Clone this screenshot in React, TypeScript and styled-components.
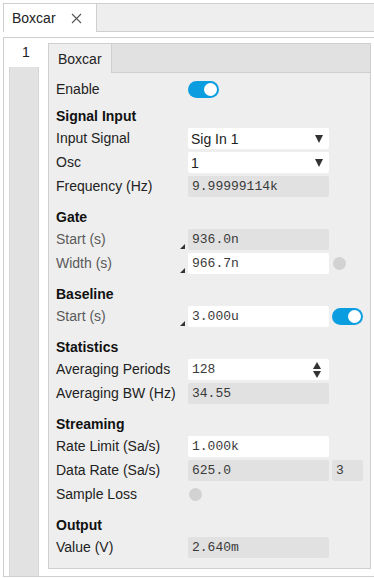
import React from 'react';
import styled, { createGlobalStyle } from 'styled-components';

const GlobalStyle = createGlobalStyle`
  html, body {
    margin: 0;
    padding: 0;
    background: #ffffff;
    font-family: "Liberation Sans", Arial, sans-serif;
    font-size: 14px;
    color: #222;
  }
`;

const Page = styled.div`
  width: 374px;
  height: 578px;
  overflow: hidden;
`;

const TopBar = styled.div`
  display: flex;
  margin: 3px 0 0 3px;
  height: 28px;
  border-top: 1px solid #cfcfcf;
  border-left: 1px solid #cfcfcf;
  background: #eeeeee;
`;

const TopTab = styled.div`
  display: flex;
  align-items: center;
  gap: 15px;
  width: 84px;
  padding-left: 8px;
  background: #ffffff;
  border-right: 1px solid #cfcfcf;
`;

const TopFill = styled.div`
  flex: 1;
  border-bottom: 1px solid #cfcfcf;
`;

const Close = styled.svg`
  width: 11px;
  height: 11px;
`;

const Outer = styled.div`
  display: flex;
  margin: 5px 0 0 3px;
  height: 538px;
  border: 1px solid #cfcfcf;
  border-right: none;
`;

const SideCol = styled.div`
  display: flex;
  flex-direction: column;
  width: 44px;
`;

const SideTab = styled.div`
  height: 29px;
  padding: 6px 0 0 18px;
  box-sizing: border-box;
`;

const SideStrip = styled.div`
  flex: 1;
  margin: 0 9px 0 5px;
  background: #e2e2e2;
  border-left: 1px solid #d6d6d6;
  border-right: 1px solid #d6d6d6;
`;

const Inner = styled.div`
  display: flex;
  flex-direction: column;
  width: 323px;
  margin: 5px 0 7px 0;
  box-sizing: border-box;
  border: 1px solid #cfcfcf;
  background: #eeeeee;
`;

const InnerBar = styled.div`
  display: flex;
  height: 28px;
  background: #e1e1e1;
  border-bottom: 1px solid #cfcfcf;
`;

const InnerTab = styled.div`
  display: flex;
  align-items: center;
  width: 53px;
  padding-left: 9px;
  margin-bottom: -1px;
  background: #eeeeee;
  border-right: 1px solid #cfcfcf;
`;

const Content = styled.div`
  display: flex;
  flex-direction: column;
  padding: 6px 0 0 7px;
`;

const Section = styled.div<{ first?: boolean }>`
  display: flex;
  flex-direction: column;
  gap: 3px;
  margin-top: ${(p) => (p.first ? '7px' : '11px')};
`;

const Header = styled.div`
  height: 18px;
  line-height: 18px;
  font-weight: bold;
  color: #111;
`;

const Row = styled.div`
  display: grid;
  grid-template-columns: 129px 141px 31px;
  column-gap: 3px;
  height: 21px;
  align-items: center;
`;

const Label = styled.div<{ dim?: boolean }>`
  display: flex;
  justify-content: space-between;
  height: 21px;
  line-height: 21px;
  color: ${(p) => (p.dim ? '#5a5a5a' : '#222')};
  white-space: nowrap;
`;

const Corner = styled.span`
  align-self: flex-end;
  margin: 0 0 1px 0;
  width: 0;
  height: 0;
  border-left: 5px solid transparent;
  border-bottom: 5px solid #333;
`;

const Field = styled.div<{ readOnly?: boolean }>`
  display: flex;
  align-items: center;
  justify-content: space-between;
  height: 21px;
  box-sizing: border-box;
  padding: 0 4px;
  border-radius: 2px;
  background: ${(p) => (p.readOnly ? '#e1e1e1' : '#ffffff')};
  font-family: "Liberation Mono", "Courier New", monospace;
  font-size: 13px;
  color: #3a3a3a;
`;

const SelectField = styled(Field)`
  padding: 0 3px;
  font-family: "Liberation Sans", Arial, sans-serif;
  font-size: 14px;
  color: #222;
`;

const Arrow = styled.span`
  margin-right: 3px;
  width: 0;
  height: 0;
  border-left: 4px solid transparent;
  border-right: 4px solid transparent;
  border-top: 8px solid #333;
`;

const Spinner = styled.span`
  display: flex;
  flex-direction: column;
  gap: 2px;
  margin-right: 4px;
`;

const SpinArrow = styled.span<{ up?: boolean }>`
  width: 0;
  height: 0;
  border-left: 4px solid transparent;
  border-right: 4px solid transparent;
  ${(p) => (p.up ? 'border-bottom: 7px solid #333;' : 'border-top: 7px solid #333;')}
`;

const Toggle = styled.div`
  display: flex;
  justify-content: flex-end;
  align-items: center;
  width: 31px;
  height: 17px;
  box-sizing: border-box;
  padding: 2px;
  border-radius: 9px;
  background: #0a9de0;
`;

const Knob = styled.div`
  width: 13px;
  height: 13px;
  border-radius: 50%;
  background: #ffffff;
`;

const Dot = styled.div`
  width: 13px;
  height: 13px;
  margin-left: 1px;
  border-radius: 50%;
  background: #d2d2d2;
`;

const Switch = () => (
  <Toggle>
    <Knob />
  </Toggle>
);

const App = () => {
  return (
    <Page>
      <GlobalStyle />
      <TopBar>
        <TopTab>
          Boxcar
          <Close viewBox="0 0 11 11">
            <path d="M1 1 L10 10 M10 1 L1 10" stroke="#555" strokeWidth="1.1" fill="none" />
          </Close>
        </TopTab>
        <TopFill />
      </TopBar>
      <Outer>
        <SideCol>
          <SideTab>1</SideTab>
          <SideStrip />
        </SideCol>
        <Inner>
          <InnerBar>
            <InnerTab>Boxcar</InnerTab>
          </InnerBar>
          <Content>
            <Row>
              <Label>Enable</Label>
              <Switch />
            </Row>

            <Section first>
              <Header>Signal Input</Header>
              <Row>
                <Label>Input Signal</Label>
                <SelectField>
                  Sig In 1
                  <Arrow />
                </SelectField>
              </Row>
              <Row>
                <Label>Osc</Label>
                <SelectField>
                  1
                  <Arrow />
                </SelectField>
              </Row>
              <Row>
                <Label>Frequency (Hz)</Label>
                <Field readOnly>9.99999114k</Field>
              </Row>
            </Section>

            <Section>
              <Header>Gate</Header>
              <Row>
                <Label dim>
                  Start (s)
                  <Corner />
                </Label>
                <Field readOnly>936.0n</Field>
              </Row>
              <Row>
                <Label dim>
                  Width (s)
                  <Corner />
                </Label>
                <Field>966.7n</Field>
                <Dot />
              </Row>
            </Section>

            <Section>
              <Header>Baseline</Header>
              <Row>
                <Label dim>
                  Start (s)
                  <Corner />
                </Label>
                <Field>3.000u</Field>
                <Switch />
              </Row>
            </Section>

            <Section>
              <Header>Statistics</Header>
              <Row>
                <Label>Averaging Periods</Label>
                <Field>
                  128
                  <Spinner>
                    <SpinArrow up />
                    <SpinArrow />
                  </Spinner>
                </Field>
              </Row>
              <Row>
                <Label>Averaging BW (Hz)</Label>
                <Field readOnly>34.55</Field>
              </Row>
            </Section>

            <Section>
              <Header>Streaming</Header>
              <Row>
                <Label>Rate Limit (Sa/s)</Label>
                <Field>1.000k</Field>
              </Row>
              <Row>
                <Label>Data Rate (Sa/s)</Label>
                <Field readOnly>625.0</Field>
                <Field readOnly>3</Field>
              </Row>
              <Row>
                <Label>Sample Loss</Label>
                <Dot />
              </Row>
            </Section>

            <Section>
              <Header>Output</Header>
              <Row>
                <Label>Value (V)</Label>
                <Field readOnly>2.640m</Field>
              </Row>
            </Section>
          </Content>
        </Inner>
      </Outer>
    </Page>
  );
};

export default App;
